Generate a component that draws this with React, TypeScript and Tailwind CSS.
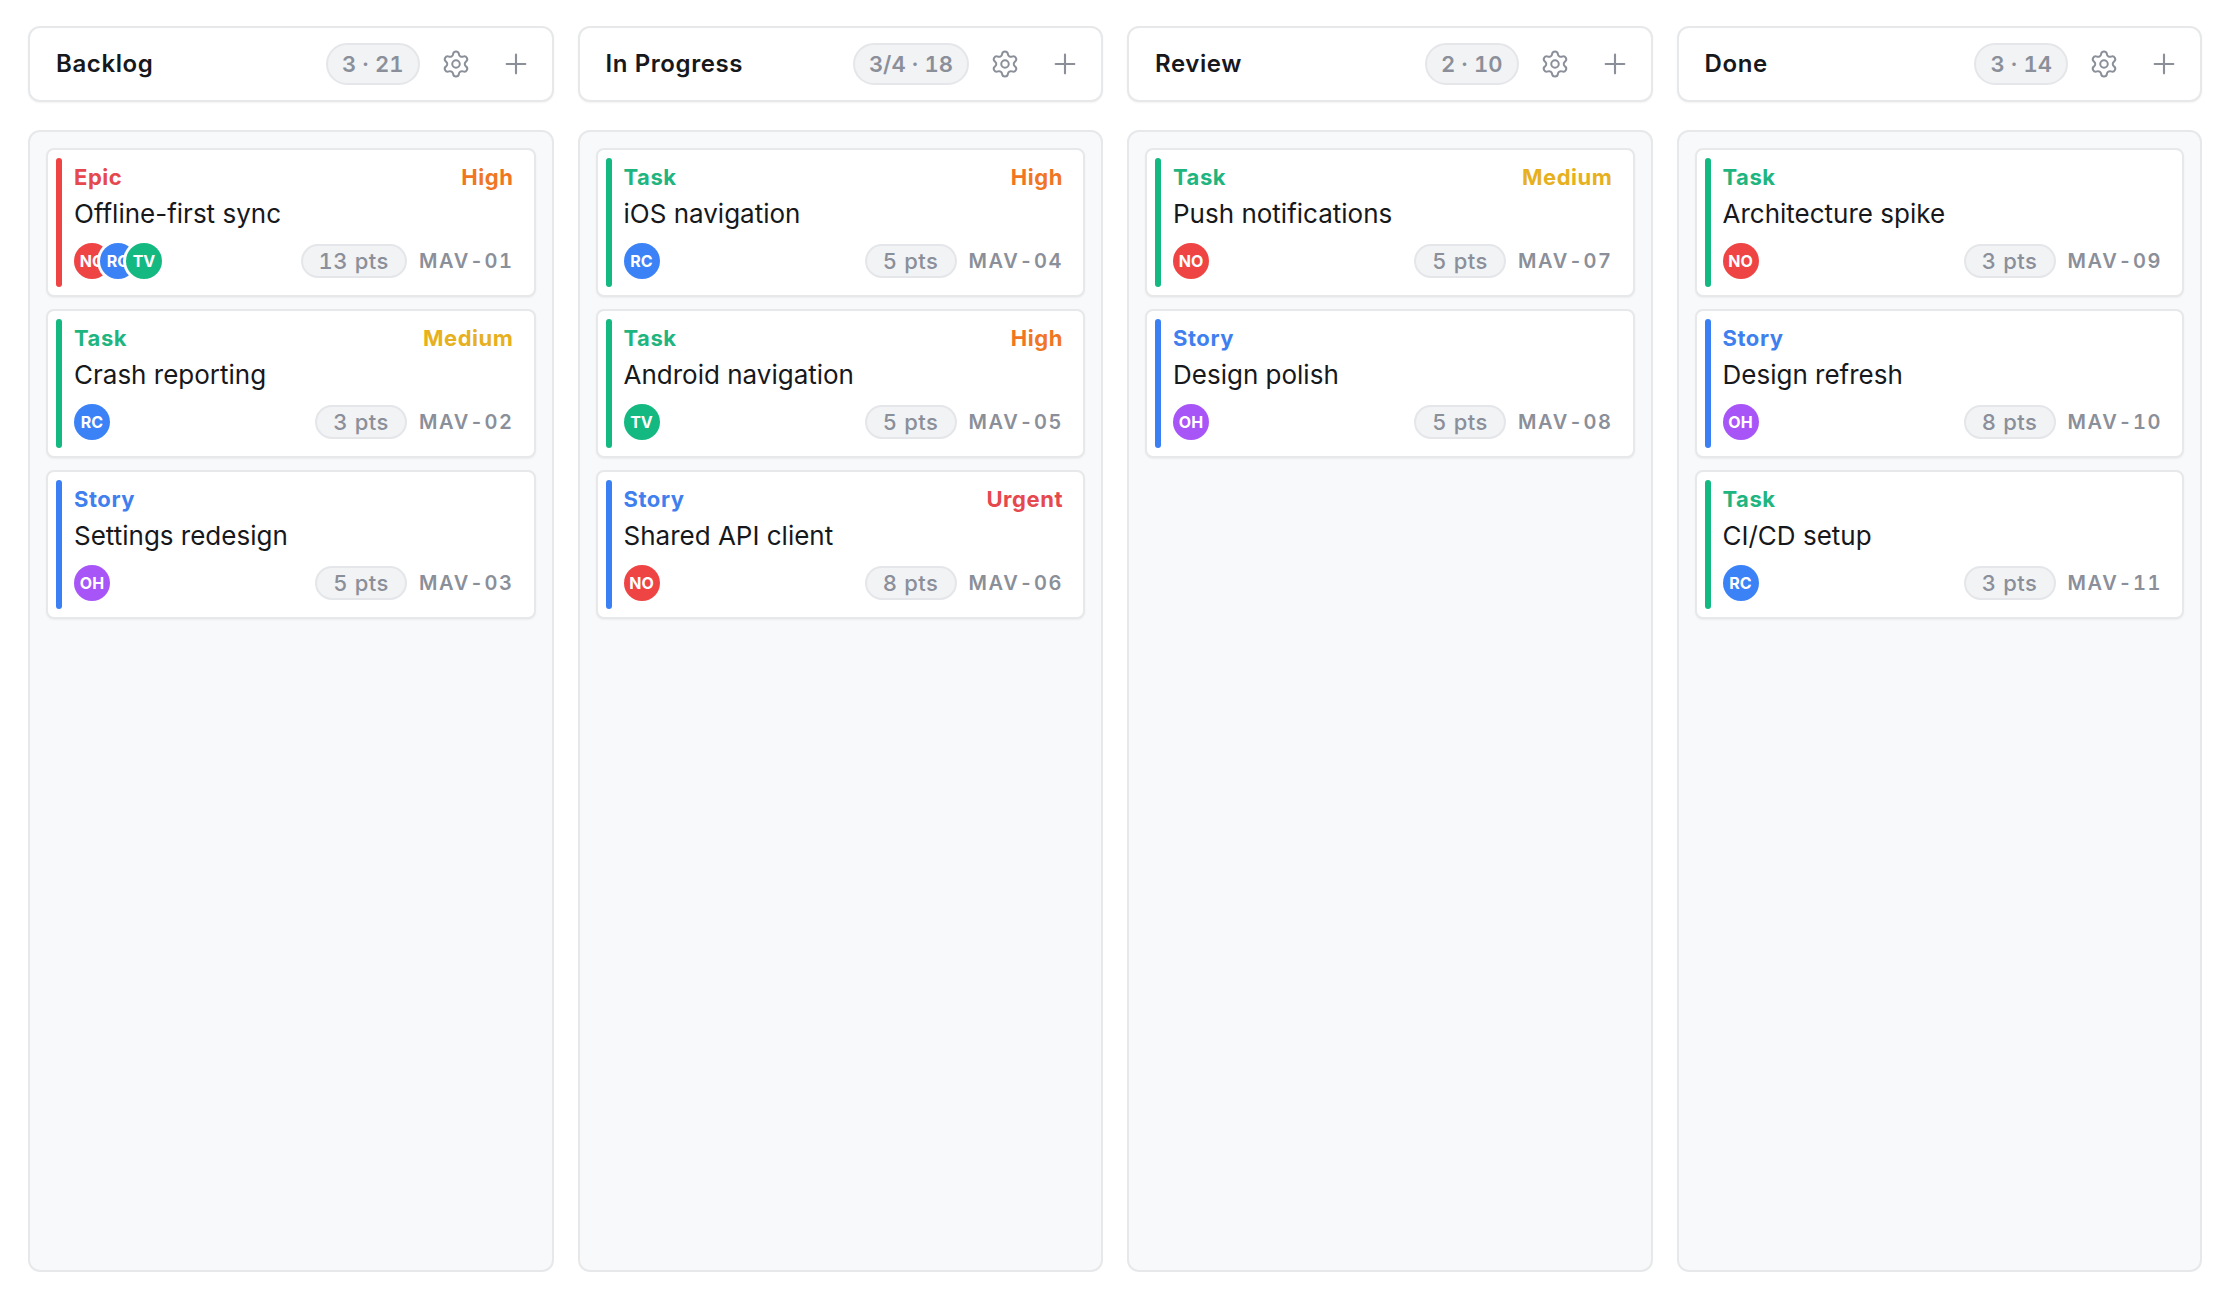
import { Plus, Settings } from "lucide-react";
import clsx from "clsx";

type Kind = "Epic" | "Task" | "Story";
type Priority = "Medium" | "High" | "Urgent";
type Person = "NO" | "RC" | "TV" | "OH";

interface Card {
  id: string;
  kind: Kind;
  title: string;
  points: number;
  people: Person[];
  priority?: Priority;
}

interface Column {
  name: string;
  summary: string;
  cards: Card[];
}

const columns: Column[] = [
  {
    name: "Backlog",
    summary: "3 · 21",
    cards: [
      { id: "MAV-01", kind: "Epic", title: "Offline-first sync", points: 13, people: ["NO", "RC", "TV"], priority: "High" },
      { id: "MAV-02", kind: "Task", title: "Crash reporting", points: 3, people: ["RC"], priority: "Medium" },
      { id: "MAV-03", kind: "Story", title: "Settings redesign", points: 5, people: ["OH"] },
    ],
  },
  {
    name: "In Progress",
    summary: "3/4 · 18",
    cards: [
      { id: "MAV-04", kind: "Task", title: "iOS navigation", points: 5, people: ["RC"], priority: "High" },
      { id: "MAV-05", kind: "Task", title: "Android navigation", points: 5, people: ["TV"], priority: "High" },
      { id: "MAV-06", kind: "Story", title: "Shared API client", points: 8, people: ["NO"], priority: "Urgent" },
    ],
  },
  {
    name: "Review",
    summary: "2 · 10",
    cards: [
      { id: "MAV-07", kind: "Task", title: "Push notifications", points: 5, people: ["NO"], priority: "Medium" },
      { id: "MAV-08", kind: "Story", title: "Design polish", points: 5, people: ["OH"] },
    ],
  },
  {
    name: "Done",
    summary: "3 · 14",
    cards: [
      { id: "MAV-09", kind: "Task", title: "Architecture spike", points: 3, people: ["NO"] },
      { id: "MAV-10", kind: "Story", title: "Design refresh", points: 8, people: ["OH"] },
      { id: "MAV-11", kind: "Task", title: "CI/CD setup", points: 3, people: ["RC"] },
    ],
  },
];

const kindText: Record<Kind, string> = {
  Epic: "text-[#e5484d]",
  Task: "text-[#1fb580]",
  Story: "text-[#3f80ee]",
};

const kindBar: Record<Kind, string> = {
  Epic: "bg-[#ef4444]",
  Task: "bg-[#14b881]",
  Story: "bg-[#3b7ff5]",
};

const priorityText: Record<Priority, string> = {
  Medium: "text-[#e6b01e]",
  High: "text-[#f07623]",
  Urgent: "text-[#e5484d]",
};

const personColor: Record<Person, string> = {
  NO: "bg-[#ef4444]",
  RC: "bg-[#3b82f6]",
  TV: "bg-[#14b881]",
  OH: "bg-[#a855f7]",
};

function TaskCard({ card }: { card: Card }) {
  return (
    <article className="flex gap-3 rounded-lg border-2 border-[#e6e8ea] bg-white p-2 shadow-xs">
      <div className={clsx("w-1.5 shrink-0 rounded-full", kindBar[card.kind])} />
      <div className="min-w-0 flex-1 pt-1 pr-3 pb-2">
        <div className="flex justify-between text-[22px] leading-[30px] font-bold tracking-wide">
          <span className={kindText[card.kind]}>{card.kind}</span>
          {card.priority && <span className={priorityText[card.priority]}>{card.priority}</span>}
        </div>
        <h3 className="mt-1 truncate text-[26px] leading-9 text-[#17181b]">{card.title}</h3>
        <div className="mt-[11px] flex items-center gap-3">
          <div className="flex -space-x-2.5">
            {card.people.map((person) => (
              <span
                key={person}
                className={clsx(
                  "flex size-9 items-center justify-center rounded-full text-base font-bold text-white ring-3 ring-white",
                  personColor[person]
                )}
              >
                {person}
              </span>
            ))}
          </div>
          <span className="ml-auto flex h-[34px] items-center rounded-full border-2 border-[#e4e6e9] bg-[#f1f3f5] px-4 text-[22px] font-medium tracking-wide text-[#8b8f99] tabular-nums">
            {card.points} pts
          </span>
          <span className="text-[20px] font-semibold tracking-[0.08em] text-[#8b8f99] tabular-nums">{card.id}</span>
        </div>
      </div>
    </article>
  );
}

function ColumnHeader({ column }: { column: Column }) {
  return (
    <header className="flex h-[76px] items-center gap-3 rounded-xl border-2 border-[#e6e8ea] bg-white pr-3 pl-[26px] shadow-xs">
      <h2 className="min-w-0 flex-1 truncate text-2xl font-semibold tracking-wide text-[#17181b]">{column.name}</h2>
      <span className="flex h-[42px] items-center rounded-full border-2 border-[#e4e6e9] bg-[#f1f3f5] px-3.5 text-[22px] font-semibold text-[#8b8f99] tabular-nums">
        {column.summary}
      </span>
      <button aria-label={`${column.name} settings`} className="flex size-12 items-center justify-center text-[#8b8f99]">
        <Settings size={30} strokeWidth={1.6} />
      </button>
      <button aria-label={`Add to ${column.name}`} className="flex size-12 items-center justify-center text-[#8b8f99]">
        <Plus size={32} strokeWidth={1.6} />
      </button>
    </header>
  );
}

export default function App() {
  return (
    <main className="grid min-h-screen grid-cols-4 gap-6 bg-white pt-[26px] pr-5 pb-5 pl-7 font-['Inter',sans-serif]">
      {columns.map((column) => (
        <section key={column.name} className="flex min-w-0 flex-col gap-7">
          <ColumnHeader column={column} />
          <div className="flex flex-1 flex-col gap-3 rounded-xl border-2 border-[#e6e8ea] bg-[#f8f9fb] p-4">
            {column.cards.map((card) => (
              <TaskCard key={card.id} card={card} />
            ))}
          </div>
        </section>
      ))}
    </main>
  );
}
